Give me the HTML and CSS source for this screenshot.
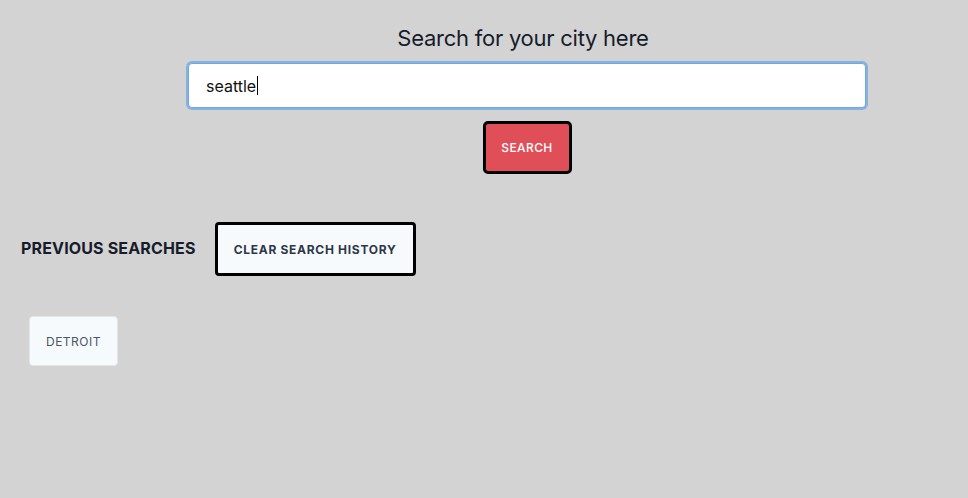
FILE: index.html
```html
<!DOCTYPE html>
<html>
<head>
<meta charset="utf-8">
<link rel="stylesheet" href="styles.css">
</head>
<body>
<section class="search">
  <h1 class="title">Search for your city here</h1>
  <div class="input-box"><span class="input-text">seattle</span><span class="caret"></span></div>
  <button class="btn-search">SEARCH</button>
</section>
<section class="history">
  <h2 class="history-title">PREVIOUS SEARCHES</h2>
  <button class="btn-clear">CLEAR SEARCH HISTORY</button>
</section>
<div class="list">
  <button class="btn-city">DETROIT</button>
</div>
</body>
</html>
```

FILE: styles.css
```css
html, body { margin: 0; padding: 0; }
body {
  background: #d3d3d3;
  font-family: Inter, "Noto Sans", sans-serif;
  color: #1a202c;
  width: 968px;
  height: 498px;
}
.search {
  margin-left: 86px;
  display: flex;
  flex-direction: column;
  align-items: center;
  padding-top: 24px;
}
.title {
  margin: 0;
  padding-right: 8px;
  font-size: 22px;
  font-weight: 400;
  line-height: 28px;
  letter-spacing: -0.25px;
  color: #171c2b;
}
.input-box {
  margin-top: 11px;
  width: 678px;
  height: 45px;
  box-sizing: border-box;
  background: #fff;
  border: 1px solid #6fa8e4;
  box-shadow: 0 0 0 2px rgba(110, 165, 225, 0.75);
  border-radius: 4px;
  display: flex;
  align-items: center;
  padding-left: 17px;
  font-size: 16px;
  color: #111;
}
.caret {
  display: inline-block;
  width: 1px;
  height: 19px;
  background: #000;
  margin-left: 1px;
}
.btn-search {
  margin-top: 13px;
  width: 89px;
  height: 53px;
  background: #e04f58;
  border: 3px solid #000;
  border-radius: 5px;
  color: #fff;
  font-family: Inter, sans-serif;
  font-size: 12px;
  font-weight: 500;
  letter-spacing: 0.4px;
}
.history {
  display: flex;
  align-items: center;
  margin-top: 48px;
  padding-left: 21px;
}
.history-title {
  margin: 0 0 2px 0;
  font-size: 16px;
  font-weight: 700;
  letter-spacing: 0.15px;
  color: #171c2b;
}
.btn-clear {
  margin-left: 19px;
  width: 201px;
  height: 54px;
  background: #f7fafc;
  border: 3px solid #000;
  border-radius: 4px;
  font-family: Inter, sans-serif;
  font-size: 12px;
  font-weight: 700;
  letter-spacing: 0.7px;
  color: #2d3748;
}
.list {
  padding: 40px 0 0 29px;
}
.btn-city {
  width: 89px;
  height: 50px;
  background: #f7fafc;
  border: 1px solid #e2e6ea;
  border-radius: 4px;
  font-family: Inter, sans-serif;
  font-size: 12px;
  font-weight: 400;
  letter-spacing: 0.5px;
  color: #4a5568;
}
```
